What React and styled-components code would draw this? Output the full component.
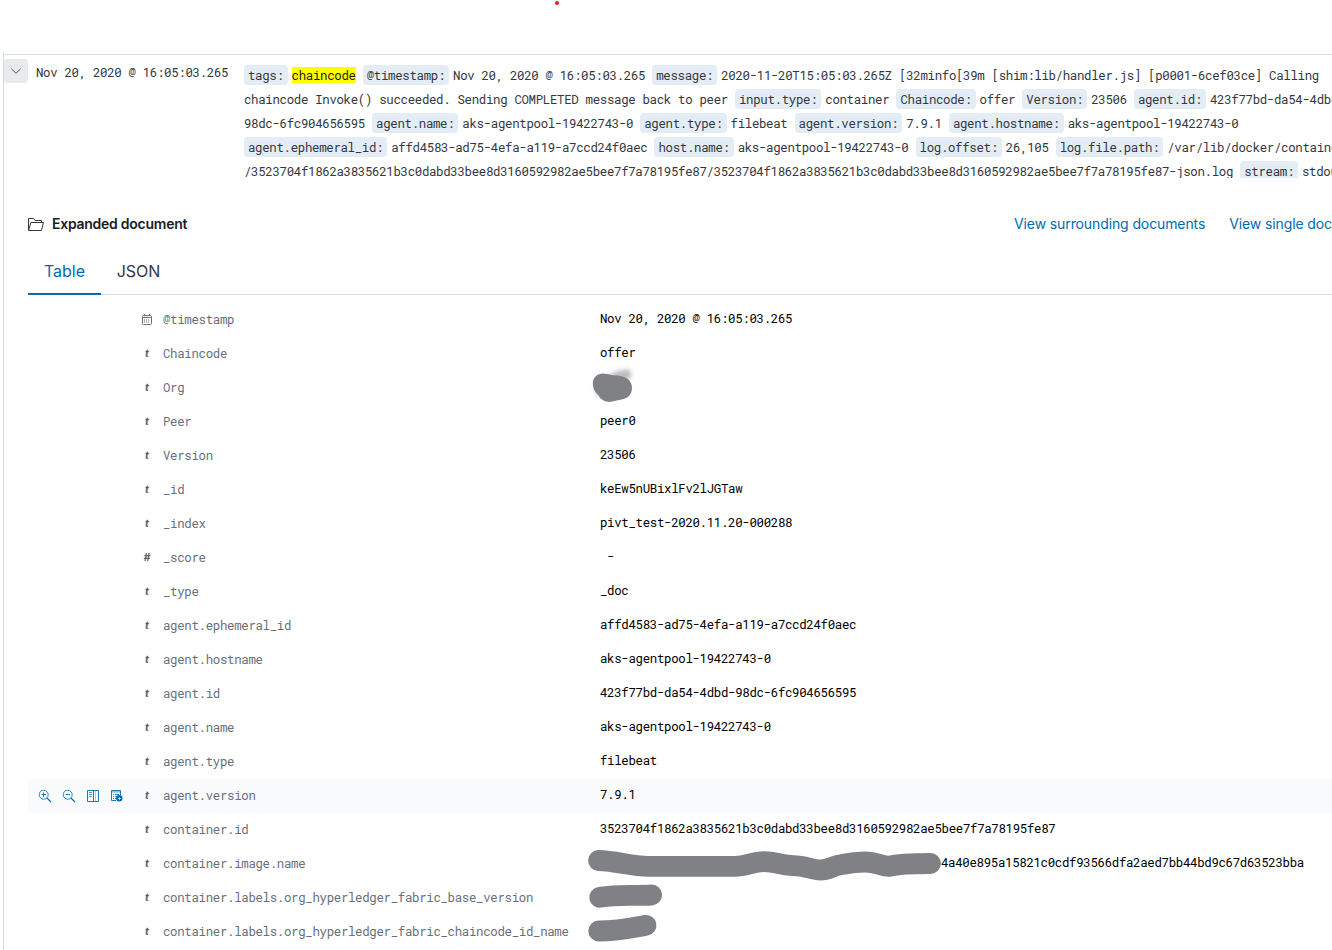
import React from 'react';
import styled, { createGlobalStyle, css } from 'styled-components';

const GlobalStyle = createGlobalStyle`
    * {
        box-sizing: border-box;
    }
    body {
        margin: 0;
        background: #fff;
        color: #343741;
        font-family: Inter, "Liberation Sans", sans-serif;
        overflow: hidden;
    }
    svg {
        flex: none;
    }
`

const mono = css`
    font-family: "Roboto Mono", "DejaVu Sans Mono", monospace;
    font-size: 12.4px;
    letter-spacing: -0.32px;
    white-space: pre;
`

const Page = styled.div`
    width: 1332px;
    height: 950px;
    overflow: hidden;
    display: flex;
    flex-direction: column;
`

const TopSpace = styled.div`
    height: 52px;
    flex: none;
    padding: 1px 0 0 555px;
`

const Dot = styled.div`
    width: 4px;
    height: 4px;
    border-radius: 50%;
    background: #f0161e;
`

const Results = styled.div`
    flex: 1;
    margin-left: 3px;
    padding-top: 2px;
    border-left: 1px solid #d3dae6;
`

const DocRow = styled.div`
    display: flex;
    height: 146px;
    border-top: 1px solid #d3dae6;
`

const Toggle = styled.button`
    width: 24px;
    height: 24px;
    margin-top: 4px;
    padding: 0;
    border: 0;
    border-radius: 4px;
    background: #e9eaec;
    display: flex;
    align-items: center;
    justify-content: center;
    flex: none;
`

const Time = styled.div`
    ${mono}
    width: 208px;
    flex: none;
    margin-left: 8px;
    padding-top: 5px;
    line-height: 24px;
`

const Source = styled.div`
    margin-top: 8px;
    height: 115px;
    overflow: hidden;
    flex: 1;
`

const Line = styled.div`
    ${mono}
    display: flex;
    align-items: center;
    height: 24px;
    line-height: 20px;
`

const FieldTag = styled.span`
    flex: none;
    height: 20px;
    padding: 0 4px;
    margin-right: 4px;
    border-radius: 4px;
    background: #e4edf5;
`

const FieldText = styled.span`
    flex: none;
    margin-right: 7.12px;
`

const Mark = styled.mark`
    flex: none;
    height: 16px;
    line-height: 16px;
    margin-right: 7.12px;
    background: #ff0;
    color: #1a1c21;
`

const Expanded = styled.div`
    padding-left: 24px;
`

const DocHeader = styled.div`
    display: flex;
    align-items: center;
    height: 47px;
`

const DocTitle = styled.h4`
    margin: 0 0 0 8px;
    flex: none;
    width: 962px;
    color: #1a1c21;
    font-size: 14px;
    font-weight: 600;
    letter-spacing: -0.26px;
`

const Link = styled.a`
    flex: none;
    margin-right: 24px;
    color: #006bb4;
    font-size: 14px;
    letter-spacing: -0.11px;
    white-space: nowrap;
`

const Tabs = styled.div`
    display: flex;
    height: 48px;
    border-bottom: 1px solid #d3dae6;
`

const Tab = styled.button`
    height: 48px;
    width: ${({ $width }) => $width}px;
    padding: 2px 0 0;
    border: 0;
    border-bottom: 2px solid ${({ $active }) => ($active ? '#006bb4' : 'transparent')};
    background: none;
    color: ${({ $active }) => ($active ? '#006bb4' : '#343741')};
    font-family: inherit;
    font-size: 16px;
    line-height: 44px;
`

const Table = styled.div`
    padding-top: 8px;
`

const Row = styled.div`
    display: grid;
    grid-template-columns: 113px 22px 437px 1fr;
    align-items: center;
    height: 34px;
    background: ${({ $hover }) => ($hover ? '#fafbfd' : 'none')};
`

const Actions = styled.div`
    display: flex;
    gap: 8px;
    padding-left: 9px;

    svg {
        width: 16px;
        height: 16px;
    }
`

const TypeIcon = styled.span`
    width: 12px;
    height: 14px;
    display: flex;
    align-items: center;
    justify-content: center;
    color: #5a606d;
    font: italic 700 10.5px/12px Inter, "Liberation Sans", sans-serif;
`

const Name = styled.div`
    ${mono}
    line-height: 18px;
    margin-top: -2px;
    color: #69707d;
`

const Value = styled.div`
    ${mono}
    position: relative;
    height: 18px;
    line-height: 18px;
    margin-top: -4px;
    padding-left: ${({ $indent }) => $indent || 0}px;
    color: #000;
`

const Redaction = styled.svg`
    position: absolute;
    left: -20px;
    top: -8px;
    overflow: visible;
    pointer-events: none;
`

const summary = [
    [['tags:', 'chaincode', true], ['@timestamp:', 'Nov 20, 2020 @ 16:05:03.265'], ['message:', '2020-11-20T15:05:03.265Z [32minfo[39m [shim:lib/handler.js] [p0001-6cef03ce] Calling']],
    [[null, 'chaincode Invoke() succeeded. Sending COMPLETED message back to peer'], ['input.type:', 'container'], ['Chaincode:', 'offer'], ['Version:', '23506'], ['agent.id:', '423f77bd-da54-4dbd-']],
    [[null, '98dc-6fc904656595'], ['agent.name:', 'aks-agentpool-19422743-0'], ['agent.type:', 'filebeat'], ['agent.version:', '7.9.1'], ['agent.hostname:', 'aks-agentpool-19422743-0']],
    [['agent.ephemeral_id:', 'affd4583-ad75-4efa-a119-a7ccd24f0aec'], ['host.name:', 'aks-agentpool-19422743-0'], ['log.offset:', '26,105'], ['log.file.path:', '/var/lib/docker/containers']],
    [[null, '/3523704f1862a3835621b3c0dabd33bee8d3160592982ae5bee7f7a78195fe87/3523704f1862a3835621b3c0dabd33bee8d3160592982ae5bee7f7a78195fe87-json.log'], ['stream:', 'stdout']],
]

const fields = [
    { type: 'date', name: '@timestamp', value: 'Nov 20, 2020 @ 16:05:03.265' },
    { name: 'Chaincode', value: 'offer' },
    { name: 'Org', blob: 'org' },
    { name: 'Peer', value: 'peer0' },
    { name: 'Version', value: '23506' },
    { name: '_id', value: 'keEw5nUBixlFv2lJGTaw' },
    { name: '_index', value: 'pivt_test-2020.11.20-000288' },
    { type: 'number', name: '_score', value: ' - ' },
    { name: '_type', value: '_doc' },
    { name: 'agent.ephemeral_id', value: 'affd4583-ad75-4efa-a119-a7ccd24f0aec' },
    { name: 'agent.hostname', value: 'aks-agentpool-19422743-0' },
    { name: 'agent.id', value: '423f77bd-da54-4dbd-98dc-6fc904656595' },
    { name: 'agent.name', value: 'aks-agentpool-19422743-0' },
    { name: 'agent.type', value: 'filebeat' },
    { name: 'agent.version', value: '7.9.1', hover: true },
    { name: 'container.id', value: '3523704f1862a3835621b3c0dabd33bee8d3160592982ae5bee7f7a78195fe87' },
    { name: 'container.image.name', value: '4a40e895a15821c0cdf93566dfa2aed7bb44bd9c67d63523bba', blob: 'image', indent: 341 },
    { name: 'container.labels.org_hyperledger_fabric_base_version', blob: 'base' },
    { name: 'container.labels.org_hyperledger_fabric_chaincode_id_name', blob: 'chaincode' },
]

// centre lines of the marker strokes, drawn from 20px left of the value
const strokes = {
    image: 'M18.5 15.5C36 16 52 21.3 68 21.3H155C167 21.3 172 16.7 184 16.7C196 16.7 202 20.6 214 20.6C225 20.6 232 25 240.5 25C249 25 252 21 262 19.5C272 17.5 277 17 285 17C296 17 302 21.3 309 21.3C318 19 330 18.5 350.5 18.5',
    base: 'M19.7 18.3C34 16 46 16.3 55 16.4C62 16.4 67 16.3 71.7 16',
    chaincode: 'M18.7 18C36 18 50 15.2 66 12.3',
}

function Blob({ kind }) {
    if (kind === 'org') {
        return (
            <Redaction width="60" height="40">
                <defs>
                    <filter id="spray" x="-30%" y="-50%" width="160%" height="200%">
                        <feGaussianBlur stdDeviation="2" />
                    </filter>
                </defs>
                <path d="M26 7L38 2L49 0L52 7L44 14Z" fill="#77787b" opacity="0.5" filter="url(#spray)" />
                <path d="M14 14L17 27L24 27Z" fill="#77787b" opacity="0.5" filter="url(#spray)" />
                <path d="M12.8 14.2C12.8 8.7 17.5 4.5 23 4.5C28 4.7 31 6.4 36 6.5C45 6.6 52 11.2 52 18.7C52 26.2 47 30.2 39 31L30 32.9C25 32.9 20.5 30.7 18.5 26.2C14.8 23.2 12.8 19.2 12.8 14.2Z" fill="#808184" />
            </Redaction>
        )
    }
    return (
        <Redaction width="380" height="40">
            <path d={strokes[kind]} fill="none" stroke="#808184" strokeWidth="20.8" strokeLinecap="round" strokeLinejoin="round" />
        </Redaction>
    )
}

function FolderIcon() {
    return (
        <svg width="16" height="16" viewBox="0 0 16 16" fill="none" stroke="#343741" strokeLinejoin="round">
            <path d="M.5 14V2.5H5.7L7 4.5H13.5V6.5" />
            <path d="M.6 14.4L2.9 6.5H15.5L13.4 14.5H.6" />
        </svg>
    )
}

function DateIcon() {
    return (
        <svg width="12" height="12" viewBox="0 0 12 12" fill="none" stroke="#69707d">
            <rect x="1.5" y="1.5" width="9" height="9" rx="1" />
            <path d="M1 3.5H11M3.5 0V2M8.5 0V2" />
            <path d="M3 6H9M3 8H9" strokeDasharray="1 1" />
        </svg>
    )
}

function RowActions() {
    return (
        <Actions>
            <svg viewBox="0 0 16 16" fill="none" stroke="#006bb4">
                <circle cx="6.7" cy="6.7" r="4.5" strokeWidth=".8" />
                <path d="M10 10L14 14" strokeWidth="1.1" />
                <path d="M4.5 6.5H9M6.5 4.5V9" strokeWidth=".9" />
            </svg>
            <svg viewBox="0 0 16 16" fill="none" stroke="#006bb4">
                <circle cx="6.7" cy="6.7" r="4.5" strokeWidth=".8" />
                <path d="M10 10L14 14" strokeWidth="1.1" />
                <path d="M4.5 6.5H9" strokeWidth=".9" />
            </svg>
            <svg viewBox="0 0 16 16" fill="none" stroke="#006bb4">
                <path d="M2.5 2.5H13.5V13.5H2.5Z" strokeWidth=".9" />
                <path d="M8.5 2.5V13.5" strokeWidth=".9" />
                <path d="M10.5 3V13" strokeWidth=".3" />
                <path d="M4 4.5H7M4 6.5H7M4 8.5H7" strokeWidth=".7" />
            </svg>
            <svg viewBox="0 0 16 16" fill="none" stroke="#006bb4">
                <path d="M7 12.5H2.5V2.5H11.5V7" strokeWidth=".9" />
                <path d="M2.5 3.9H11.5" strokeWidth=".7" />
                <path d="M4 6.5H5M6 6.5H10M4 8.5H5M6 8.5H8M4 10.5H5M6 10.5H7" strokeWidth=".8" />
                <circle cx="10.3" cy="10.3" r="3.2" fill="#006bb4" stroke="none" />
                <path d="M9 10.5H12M10.5 9V12" stroke="#fff" strokeWidth=".6" />
            </svg>
        </Actions>
    )
}

function FieldType({ type }) {
    if (type === 'date') return <TypeIcon><DateIcon /></TypeIcon>
    return <TypeIcon>{type === 'number' ? '#' : 't'}</TypeIcon>
}

export default function App() {
    return (
        <Page>
            <GlobalStyle />
            <TopSpace><Dot /></TopSpace>
            <Results>
                <DocRow>
                    <Toggle>
                        <svg width="16" height="16" viewBox="0 0 16 16" fill="none" stroke="#535966">
                            <path d="M3.5 6L8 10.2L12.5 6" strokeLinecap="round" strokeLinejoin="round" />
                        </svg>
                    </Toggle>
                    <Time>Nov 20, 2020 @ 16:05:03.265</Time>
                    <Source>
                        {summary.map((line, i) => (
                            <Line key={i}>
                                {line.map(([tag, text, marked]) => (
                                    <React.Fragment key={text + tag}>
                                        {tag && <FieldTag>{tag}</FieldTag>}
                                        {marked ? <Mark>{text}</Mark> : <FieldText>{text}</FieldText>}
                                    </React.Fragment>
                                ))}
                            </Line>
                        ))}
                    </Source>
                </DocRow>
                <Expanded>
                    <DocHeader>
                        <FolderIcon />
                        <DocTitle>Expanded document</DocTitle>
                        <Link>View surrounding documents</Link>
                        <Link>View single document</Link>
                    </DocHeader>
                    <Tabs>
                        <Tab $active $width={73}>Table</Tab>
                        <Tab $width={75}>JSON</Tab>
                    </Tabs>
                    <Table>
                        {fields.map(({ type, name, value, blob, indent, hover }) => (
                            <Row key={name} $hover={hover}>
                                {hover ? <RowActions /> : <span />}
                                <FieldType type={type} />
                                <Name>{name}</Name>
                                <Value $indent={indent}>
                                    {value}
                                    {blob && <Blob kind={blob} />}
                                </Value>
                            </Row>
                        ))}
                    </Table>
                </Expanded>
            </Results>
        </Page>
    )
}
